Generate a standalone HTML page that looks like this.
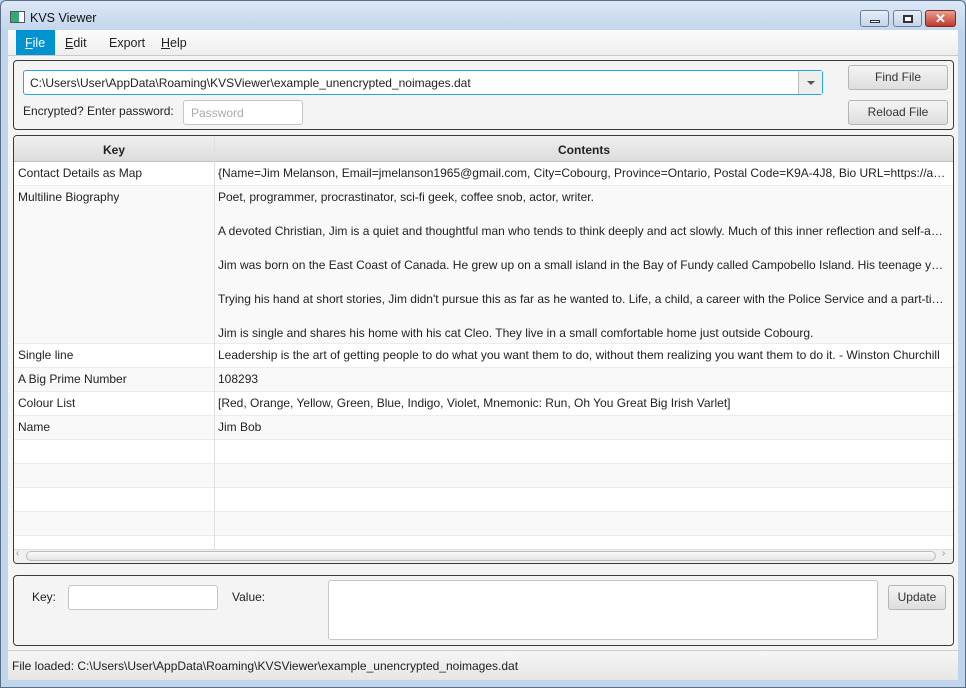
<!DOCTYPE html><html><head><style>
*{box-sizing:border-box;margin:0;padding:0}
body{width:966px;height:688px;overflow:hidden;font-family:"Liberation Sans",sans-serif;font-size:12px;color:#222;background:#bcd3ea;position:relative}
.a{position:absolute}
.title{left:0;top:0;width:966px;height:30px;background:linear-gradient(#dbe8f6,#c3d6ec);border:1px solid #5c6e85;border-bottom:none;border-radius:6px 6px 0 0}
.frame{left:0;top:30px;width:966px;height:658px;background:#c0d5ec;border:1px solid #5c6e85;border-top:none}
.client{left:8px;top:30px;width:950px;height:650px;background:#f4f4f4}
.menu{left:8px;top:30px;width:950px;height:26px;background:linear-gradient(#fcfcfc,#eeeeee);border-bottom:1px solid #c8c8c8}
.mi{top:6px;font-size:12.5px;color:#222}
.panel{border:1px solid #3a3a3a;border-radius:4px;background:#f4f4f4}
.btn{border:1px solid #b5b5b5;border-radius:3px;background:linear-gradient(#f4f4f4,#dedede);text-align:center;line-height:22px;color:#333}
.inp{background:#fff;border:1px solid #c6c6c6;border-radius:3px}
.row{position:absolute;left:0;width:940px;border-bottom:1px solid #ececec}
.row span{position:absolute;white-space:nowrap;overflow:hidden}
.k{left:4px;top:4px}
.v{left:204px;top:4px;width:730px;text-overflow:ellipsis}
</style></head><body>
<div class="a title"></div>
<div class="a frame"></div>
<div class="a" style="left:10px;top:11px;width:15px;height:12px;border:1px solid #555;background:linear-gradient(90deg,#3a7 0,#3a7 60%,#fff 60%)"></div>
<div class="a" style="left:30px;top:11px;font-size:12.5px;color:#111">KVS Viewer</div>
<div class="a" style="left:860px;top:10px;width:29px;height:17px;border:1px solid #6d7f98;border-radius:3px;background:linear-gradient(#e6eef8,#c5d5e8)"><div class="a" style="left:9px;top:9px;width:10px;height:3px;background:#fff;border:1px solid #333"></div></div>
<div class="a" style="left:893px;top:10px;width:29px;height:17px;border:1px solid #6d7f98;border-radius:3px;background:linear-gradient(#e6eef8,#c5d5e8)"><div class="a" style="left:9px;top:4px;width:10px;height:8px;border:2px solid #333;background:#fff"></div></div>
<div class="a" style="left:925px;top:10px;width:31px;height:17px;border:1px solid #7a2a20;border-radius:3px;background:linear-gradient(#e8a090,#c0392b);color:#fff;font-weight:bold;text-align:center;line-height:15px;font-size:13px">✕</div>
<div class="a client"></div>
<div class="a menu"></div>
<div class="a" style="left:16px;top:30px;width:39px;height:25px;background:#0093d0"></div>
<div class="a mi" style="left:25px;top:36px;color:#fff"><u>F</u>ile</div>
<div class="a mi" style="left:65px;top:36px"><u>E</u>dit</div>
<div class="a mi" style="left:109px;top:36px">Export</div>
<div class="a mi" style="left:161px;top:36px"><u>H</u>elp</div>

<div class="a panel" style="left:13px;top:60px;width:941px;height:70px"></div>
<div class="a inp" style="left:23px;top:70px;width:800px;height:25px;border:1px solid #2aa6dd;border-radius:3px"></div>
<div class="a" style="left:30px;top:76px">C:\Users\User\AppData\Roaming\KVSViewer\example_unencrypted_noimages.dat</div>
<div class="a" style="left:798px;top:71px;width:24px;height:23px;border-left:1px solid #bbb;background:#eee"><div class="a" style="left:8px;top:10px;border:4px solid transparent;border-top:4px solid #555"></div></div>
<div class="a" style="left:23px;top:104px">Encrypted? Enter password:</div>
<div class="a inp" style="left:183px;top:100px;width:120px;height:25px"></div>
<div class="a" style="left:191px;top:106px;color:#aaa">Password</div>
<div class="a btn" style="left:848px;top:65px;width:100px;height:25px">Find File</div>
<div class="a btn" style="left:848px;top:100px;width:100px;height:25px">Reload File</div>

<div class="a panel" style="left:13px;top:135px;width:941px;height:429px;background:#fff;overflow:hidden">
<div class="a" style="left:0;top:0;width:940px;height:26px;background:linear-gradient(#f0f0f0,#dcdcdc);border-bottom:1px solid #c0c0c0"></div>
<div class="a" style="left:0;top:7px;width:200px;text-align:center;font-weight:bold">Key</div>
<div class="a" style="left:200px;top:7px;width:740px;text-align:center;font-weight:bold">Contents</div>
<div style="position:absolute;left:0;top:26px">
<div class="row" style="top:0;height:24px;background:#fff"><span class="k">Contact Details as Map</span><span class="v">{Name=Jim Melanson, Email=jmelanson1965@gmail.com, City=Cobourg, Province=Ontario, Postal Code=K9A-4J8, Bio URL=https://about.me/jimmelanson</span></div>
<div class="row" style="top:24px;height:158px;background:#f9f9f9"><span class="k">Multiline Biography</span>
<span class="v" style="top:4px">Poet, programmer, procrastinator, sci-fi geek, coffee snob, actor, writer.</span>
<span class="v" style="top:38px">A devoted Christian, Jim is a quiet and thoughtful man who tends to think deeply and act slowly. Much of this inner reflection and self-assessment</span>
<span class="v" style="top:72px">Jim was born on the East Coast of Canada. He grew up on a small island in the Bay of Fundy called Campobello Island. His teenage years were</span>
<span class="v" style="top:106px">Trying his hand at short stories, Jim didn't pursue this as far as he wanted to. Life, a child, a career with the Police Service and a part-time job</span>
<span class="v" style="top:140px">Jim is single and shares his home with his cat Cleo. They live in a small comfortable home just outside Cobourg.</span></div>
<div class="row" style="top:182px;height:24px;background:#fff"><span class="k">Single line</span><span class="v">Leadership is the art of getting people to do what you want them to do, without them realizing you want them to do it. - Winston Churchill</span></div>
<div class="row" style="top:206px;height:24px;background:#f9f9f9"><span class="k">A Big Prime Number</span><span class="v">108293</span></div>
<div class="row" style="top:230px;height:24px;background:#fff"><span class="k">Colour List</span><span class="v">[Red, Orange, Yellow, Green, Blue, Indigo, Violet, Mnemonic: Run, Oh You Great Big Irish Varlet]</span></div>
<div class="row" style="top:254px;height:24px;background:#f9f9f9"><span class="k">Name</span><span class="v">Jim Bob</span></div>
<div class="row" style="top:278px;height:24px;background:#fff"></div>
<div class="row" style="top:302px;height:24px;background:#f9f9f9"></div>
<div class="row" style="top:326px;height:24px;background:#fff"></div>
<div class="row" style="top:350px;height:24px;background:#f9f9f9"></div>
<div class="row" style="top:374px;height:24px;background:#fff"></div>
</div>
<div class="a" style="left:200px;top:0;width:1px;height:413px;background:#e0e0e0"></div>
<div class="a" style="left:0;top:413px;width:940px;height:14px;background:#f0f0f0;border-top:1px solid #ddd"></div>
<div class="a" style="left:12px;top:415px;width:910px;height:10px;border:1px solid #bbb;border-radius:5px;background:linear-gradient(#fafafa,#e4e4e4)"></div>
<div class="a" style="left:2px;top:412px;color:#999;font-size:10px">‹</div>
<div class="a" style="left:928px;top:412px;color:#999;font-size:10px">›</div>
</div>

<div class="a panel" style="left:13px;top:575px;width:941px;height:71px"></div>
<div class="a" style="left:32px;top:590px">Key:</div>
<div class="a inp" style="left:68px;top:585px;width:150px;height:25px"></div>
<div class="a" style="left:232px;top:590px">Value:</div>
<div class="a inp" style="left:328px;top:580px;width:550px;height:60px"></div>
<div class="a btn" style="left:888px;top:585px;width:58px;height:25px">Update</div>
<div class="a" style="left:8px;top:650px;width:950px;height:30px;background:linear-gradient(#f6f6f6,#e6e6e6);border-top:1px solid #d0d0d0"></div>
<div class="a" style="left:12px;top:659px">File loaded: C:\Users\User\AppData\Roaming\KVSViewer\example_unencrypted_noimages.dat</div>
</body></html>
